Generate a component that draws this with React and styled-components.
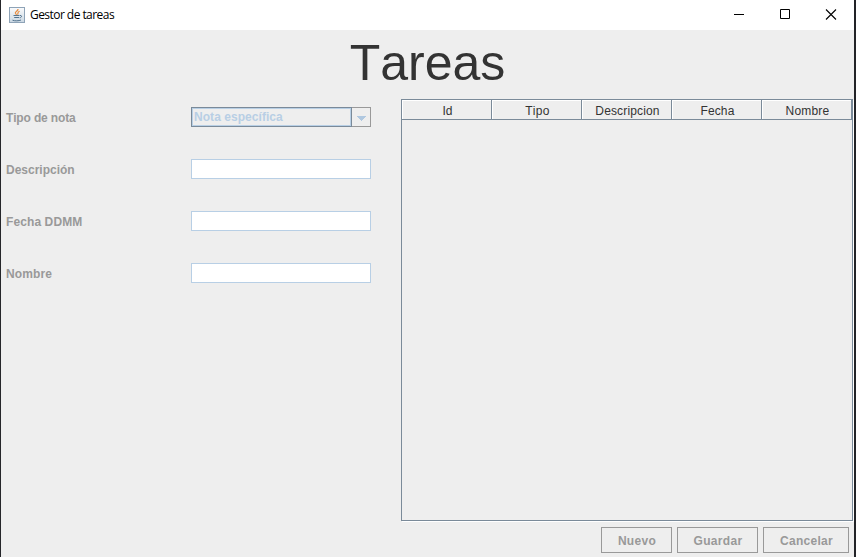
import React from "react";
import styled, { createGlobalStyle } from "styled-components";

const Global = createGlobalStyle`
  * { box-sizing: border-box; }
  body { margin: 0; background: #eee; }
`;

const Window = styled.div`
  width: 856px;
  height: 557px;
  display: flex;
  flex-direction: column;
  overflow: hidden;
  border-left: 1px solid #25262a;
  border-right: 2px solid #222327;
  background: #eee;
  font: 12px "Liberation Sans", Arial, sans-serif;
  font-kerning: none;
  color: #333;
`;

const TitleBar = styled.header`
  height: 30px;
  flex: none;
  display: flex;
  align-items: center;
  background: #fff;
  padding-left: 8px;
`;

const WindowTitle = styled.span`
  flex: 1;
  margin-left: 5px;
  font: 12px "Open Sans", "Noto Sans", sans-serif;
  letter-spacing: -0.55px;
  color: #000;
  line-height: 30px;
`;

const WindowButton = styled.button`
  width: 46px;
  height: 29px;
  padding: 0;
  border: 0;
  background: none;
  display: grid;
  place-items: center;
`;

const Controls = styled.div`
  display: flex;
  margin-top: -1px;
`;

const Heading = styled.h1`
  height: 69px;
  flex: none;
  margin: 0;
  font-size: 50px;
  font-weight: 400;
  line-height: 67px;
  text-align: center;
`;

const Content = styled.main`
  height: 423px;
  flex: none;
  display: flex;
  justify-content: space-between;
  padding: 0 1px 0 5px;
`;

const Form = styled.form`
  width: 365px;
  padding-top: 8px;
  display: flex;
  flex-direction: column;
  gap: 32px;
`;

const Field = styled.label`
  height: 20px;
  display: grid;
  grid-template-columns: 185px 180px;
  align-items: stretch;
  line-height: 23px;
`;

const Caption = styled.span`
  font-weight: 700;
  color: #999;
  white-space: nowrap;
  letter-spacing: ${(p) => p.$spacing || 0}px;
`;

const TextInput = styled.input`
  width: 180px;
  height: 20px;
  border: 1px solid #b8cfe5;
  border-radius: 0;
  background: #fff;
  outline: none;
`;

const Combo = styled.div`
  display: flex;
  height: 20px;
  border: 1px solid #999;
`;

const ComboValue = styled.div`
  width: 161px;
  margin: -1px 0 -1px -1px;
  border: 1px solid #7a8a99;
  box-shadow: inset 0 0 0 1px #b8cfe5;
  padding-left: 2px;
  font-weight: 700;
  line-height: 19px;
  color: #b8cfe5;
  letter-spacing: 0.05px;
`;

const ComboArrow = styled.div`
  flex: 1;
  display: grid;
  place-items: center;
  padding-top: 2px;
`;

const TablePane = styled.section`
  width: 452px;
  height: 422px;
  border: 1px solid #7a8a99;
  box-shadow: 1px 1px 0 #fff;
`;

const HeaderRow = styled.div`
  display: grid;
  grid-template-columns: repeat(5, 90px);
`;

const HeaderCell = styled.div`
  height: 20px;
  border-right: 1px solid #7a8a99;
  border-bottom: 1px solid #7a8a99;
  box-shadow: inset 1px 1px 0 #fff;
  padding-left: 2px;
  line-height: 22px;
  text-align: center;
  letter-spacing: ${(p) => p.$spacing || 0}px;
`;

const Actions = styled.footer`
  display: flex;
  justify-content: flex-end;
  gap: 5px;
  padding: 5px 5px 0 0;
`;

const ActionButton = styled.button`
  width: ${(p) => p.$width}px;
  height: 26px;
  padding: 1px 0 0 1px;
  border: 1px solid #999;
  border-radius: 0;
  background: #eee;
  color: #999;
  font: 700 12px "Liberation Sans", Arial, sans-serif;
  letter-spacing: 0.3px;
`;

const columns = [
  ["Id"], ["Tipo", 0.3], ["Descripcion", 0.15], ["Fecha", 0.1], ["Nombre", 0.2],
];
const fields = [["Descripción", 0], ["Fecha DDMM", 0.1], ["Nombre", 0.1]];
const actions = [["Nuevo", 71], ["Guardar", 81], ["Cancelar", 86]];

const JavaIcon = () => (
  <svg width="16" height="16" viewBox="0 0 16 16" fill="none">
    <defs>
      <linearGradient id="tile" x2="0" y2="1">
        <stop stopColor="#fafbfc" />
        <stop offset="1" stopColor="#cad7e2" />
      </linearGradient>
    </defs>
    <rect x=".5" y=".5" width="15" height="15" fill="url(#tile)" stroke="#8ea3b7" />
    <path d="M9 2C9.400 4 5.600 4.500 6.400 6.300L7.600 7.800M10.600 4.200C7.800 5.300 9.600 6.300 8.500 7.700" stroke="#e88b3c" strokeWidth="1.200" />
    <path d="M4.500 8.500h6M5.200 10.500h5M3.500 13.200c2 .9 6.500.8 8.500-.2M11 8.500c2.300-.4 1.900 2-.2 2.300" stroke="#53748f" />
  </svg>
);

export default function App() {
  return (
    <>
      <Global />
      <Window>
        <TitleBar>
          <JavaIcon />
          <WindowTitle>Gestor de tareas</WindowTitle>
          <Controls>
            <WindowButton aria-label="Minimizar">
              <svg width="12" height="11" stroke="#000"><path d="M1 5.500h10" /></svg>
            </WindowButton>
            <WindowButton aria-label="Maximizar">
              <svg width="10" height="11" stroke="#000" fill="none"><path d="M.5.5h9v9h-9z" /></svg>
            </WindowButton>
            <WindowButton aria-label="Cerrar">
              <svg width="12" height="11" stroke="#000" strokeWidth="1.100"><path d="M1 .500l10 10M11 .500l-10 10" /></svg>
            </WindowButton>
          </Controls>
        </TitleBar>
        <Heading>Tareas</Heading>
        <Content>
          <Form>
            <Field as="div">
              <Caption $spacing={-0.15}>Tipo de nota</Caption>
              <Combo>
                <ComboValue>Nota específica</ComboValue>
                <ComboArrow>
                  <svg width="10" height="5" fill="#b0c8e0" shapeRendering="crispEdges"><path d="M0 0h10L5 5z" /></svg>
                </ComboArrow>
              </Combo>
            </Field>
            {fields.map(([name, spacing]) => (
              <Field key={name}>
                <Caption $spacing={spacing}>{name}</Caption>
                <TextInput disabled />
              </Field>
            ))}
          </Form>
          <TablePane>
            <HeaderRow>
              {columns.map(([name, spacing]) => (
                <HeaderCell key={name} $spacing={spacing}>{name}</HeaderCell>
              ))}
            </HeaderRow>
          </TablePane>
        </Content>
        <Actions>
          {actions.map(([name, width]) => (
            <ActionButton key={name} $width={width} disabled>{name}</ActionButton>
          ))}
        </Actions>
      </Window>
    </>
  );
}
